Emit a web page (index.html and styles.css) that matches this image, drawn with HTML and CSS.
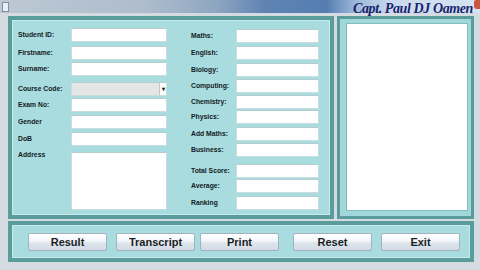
FILE: index.html
```html
<!DOCTYPE html>
<html>
<head>
<meta charset="utf-8">
<link rel="stylesheet" href="styles.css">
</head>
<body>
<div class="window">
  <div class="titlebar">
    <span class="sysicon"></span>
    <span class="title">Capt. Paul DJ Oamen</span>
    <span class="close"></span>
  </div>
  <div class="client">
    <div class="panels">
      <div class="form-panel">
        <div class="col-left">
          <span class="lbl">Student ID:</span><span class="field"></span>
          <span class="lbl">Firstname:</span><span class="field"></span>
          <span class="lbl">Surname:</span><span class="field"></span>
          <span class="lbl">Course Code:</span><span class="field combo"><span class="arrow">&#9662;</span></span>
          <span class="lbl">Exam No:</span><span class="field"></span>
          <span class="lbl">Gender</span><span class="field"></span>
          <span class="lbl">DoB</span><span class="field"></span>
          <span class="lbl top">Address</span><span class="field area"></span>
        </div>
        <div class="col-right">
          <span class="lbl">Maths:</span><span class="field"></span>
          <span class="lbl">English:</span><span class="field"></span>
          <span class="lbl">Biology:</span><span class="field"></span>
          <span class="lbl">Computing:</span><span class="field"></span>
          <span class="lbl">Chemistry:</span><span class="field"></span>
          <span class="lbl">Physics:</span><span class="field"></span>
          <span class="lbl">Add Maths:</span><span class="field"></span>
          <span class="lbl">Business:</span><span class="field"></span>
          <span class="lbl">Total Score:</span><span class="field"></span>
          <span class="lbl">Average:</span><span class="field"></span>
          <span class="lbl">Ranking</span><span class="field"></span>
        </div>
      </div>
      <div class="side-panel"><div class="side-box"></div></div>
    </div>
    <div class="button-bar">
      <button class="btn">Result</button>
      <button class="btn">Transcript</button>
      <button class="btn btn-near">Print</button>
      <button class="btn btn-far">Reset</button>
      <button class="btn">Exit</button>
    </div>
  </div>
</div>
</body>
</html>
```
FILE: styles.css
```css
html, body {
  margin: 0;
  padding: 0;
  width: 480px;
  height: 270px;
  overflow: hidden;
  background: #d4dce2;
  font-family: "Liberation Sans", Arial, sans-serif;
}

.window {
  width: 480px;
  height: 270px;
}

.titlebar {
  height: 13px;
  display: flex;
  align-items: flex-start;
  background: linear-gradient(90deg, #bcc8d4 0%, #aebdcc 30%, #8fa6c0 45%, #5f84b3 55%, #557db0 68%, #9db8da 74%, #c9daee 82%, #d6e4f2 100%);
}

.sysicon {
  width: 5px;
  height: 8px;
  margin: 2px 0 0 2px;
  background: #e8eef4;
  border: 1px solid #8090a0;
}

.title {
  position: relative;
  z-index: 2;
  margin-left: auto;
  margin-top: 2px;
  font-family: "Liberation Serif", "Times New Roman", serif;
  font-weight: bold;
  font-style: italic;
  font-size: 14px;
  line-height: 14px;
  letter-spacing: -0.4px;
  color: #1a1f6e;
}

.close {
  width: 6px;
  height: 9px;
  margin-left: 1px;
  background: #c9563e;
  border-radius: 2px 0 0 3px;
}

.client {
  padding: 3px 6px 0 8px;
}

.panels {
  display: flex;
  gap: 3px;
  height: 203px;
}

.form-panel {
  width: 326px;
  box-sizing: border-box;
  border: 4px solid #5a9c9b;
  box-shadow: inset 0 0 0 1px #c6ecee;
  background: #a9dcdf;
  padding: 8px 0 0 6px;
  display: flex;
  gap: 24px;
  color: #141a24;
  font-size: 6.8px;
  font-weight: bold;
}

.col-left {
  display: grid;
  grid-template-columns: 53px 96px;
  grid-template-rows: 14px 18px 16px 20px 16px 17px 17px 64px;
  align-items: end;
}

.col-right {
  margin-top: 1px;
  display: grid;
  grid-template-columns: 45px 83px;
  grid-template-rows: 14px 17px 17px 16px 16px 15px 17px 16px 21px 15px 17px;
  align-items: end;
}

.lbl {
  line-height: 14px;
  white-space: nowrap;
}

.lbl.top {
  align-self: start;
  margin-top: 2px;
}

.field {
  height: 14px;
  box-sizing: border-box;
  background: #ffffff;
  border: 1px solid #c9dde0;
  border-top-color: #b6cdd0;
  display: block;
}

.field.combo {
  background: #e4e6e6;
  display: flex;
  justify-content: flex-end;
}

.arrow {
  width: 6px;
  height: 12px;
  background: #fbfbfb;
  border-left: 1px solid #c0c8ca;
  font-size: 6px;
  line-height: 12px;
  text-align: center;
  color: #202020;
}

.field.area {
  height: 58px;
}

.side-panel {
  width: 137px;
  box-sizing: border-box;
  border: 3px solid #5a9c9b;
  background: #a2d8da;
  padding: 4px 3px 5px 6px;
}

.side-box {
  height: 100%;
  box-sizing: border-box;
  background: #ffffff;
  border: 1px solid #82bcbc;
}

.button-bar {
  margin-top: 2px;
  height: 41px;
  box-sizing: border-box;
  border: 4px solid #5a9c9b;
  box-shadow: inset 0 0 0 1px #c6ecee;
  background: #a9dcdf;
  padding: 8px 0 0 16px;
  display: flex;
  gap: 9px;
  align-items: flex-start;
}

.btn-near {
  margin-left: -4px;
}

.btn-far {
  margin-left: 5px;
}

.btn {
  width: 79px;
  height: 18px;
  padding: 0;
  margin-top: 0;
  box-sizing: border-box;
  border: 1px solid #a3b1bf;
  border-radius: 2px;
  background: linear-gradient(180deg, #ffffff 0%, #f2f5f9 45%, #dde4ec 55%, #d3dce6 100%);
  font-family: "Liberation Sans", Arial, sans-serif;
  font-weight: bold;
  font-size: 11px;
  line-height: 16px;
  color: #1c1f26;
}
```
